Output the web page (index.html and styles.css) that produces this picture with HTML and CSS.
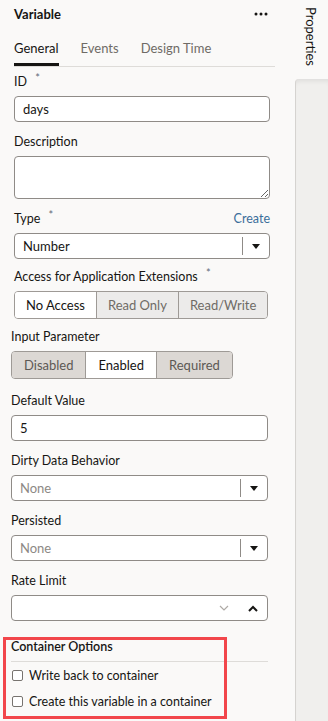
FILE: index.html
```html
<!DOCTYPE html>
<html lang="en">

<head>
    <meta charset="UTF-8">
    <meta name="viewport" content="width=device-width, initial-scale=1.0">
    <title>Variable</title>
    <link rel="stylesheet" href="styles.css">
</head>

<body>
    <div class="app">
        <main class="panel">
            <header class="panel-header">
                <h1 class="panel-title">Variable</h1>
                <span class="more">
                    <svg width="14" height="4" viewBox="0 0 14 4">
                        <circle cx="2" cy="2" r="1.5" />
                        <circle cx="7" cy="2" r="1.5" />
                        <circle cx="12" cy="2" r="1.5" />
                    </svg>
                </span>
            </header>

            <nav class="tabs">
                <span class="tab tab--active">General</span>
                <span class="tab">Events</span>
                <span class="tab">Design Time</span>
            </nav>

            <div class="form form--top">
                <div class="field field--first">
                    <div class="field-label"><span>ID <span class="req">*</span></span></div>
                    <input class="input" type="text" value="days" readonly>
                </div>

                <div class="field">
                    <div class="field-label"><span>Description</span></div>
                    <textarea class="input textarea" readonly></textarea>
                </div>

                <div class="field">
                    <div class="field-label">
                        <span>Type <span class="req">*</span></span>
                        <a class="link">Create</a>
                    </div>
                    <div class="select">
                        <span class="select-value">Number</span>
                        <span class="select-btn">
                            <svg width="8" height="5" viewBox="0 0 8 5"><path d="M0 0h8L4 5z" /></svg>
                        </span>
                    </div>
                </div>

                <div class="field field--choice">
                    <div class="field-label"><span>Access for Application Extensions <span class="req">*</span></span></div>
                    <div class="segmented">
                        <span class="segment segment--on">No Access</span>
                        <span class="segment">Read Only</span>
                        <span class="segment">Read/Write</span>
                    </div>
                </div>
            </div>

            <div class="form form--bottom">
                <div class="field field--choice">
                    <div class="field-label"><span>Input Parameter</span></div>
                    <div class="segmented segmented--dark">
                        <span class="segment">Disabled</span>
                        <span class="segment segment--on">Enabled</span>
                        <span class="segment">Required</span>
                    </div>
                </div>

                <div class="field">
                    <div class="field-label"><span>Default Value</span></div>
                    <input class="input" type="text" value="5" readonly>
                </div>

                <div class="field">
                    <div class="field-label"><span>Dirty Data Behavior</span></div>
                    <div class="select">
                        <span class="select-value placeholder">None</span>
                        <span class="select-btn">
                            <svg width="8" height="5" viewBox="0 0 8 5"><path d="M0 0h8L4 5z" /></svg>
                        </span>
                    </div>
                </div>

                <div class="field">
                    <div class="field-label"><span>Persisted</span></div>
                    <div class="select">
                        <span class="select-value placeholder">None</span>
                        <span class="select-btn">
                            <svg width="8" height="5" viewBox="0 0 8 5"><path d="M0 0h8L4 5z" /></svg>
                        </span>
                    </div>
                </div>

                <div class="field">
                    <div class="field-label"><span>Rate Limit</span></div>
                    <div class="select">
                        <span class="select-value"></span>
                        <span class="combo-icons">
                            <svg class="chev-light" width="10" height="6" viewBox="0 0 10 6"><path d="M1 1l4 4 4-4" /></svg>
                            <svg class="chev-bold" width="10" height="7" viewBox="0 0 10 7"><path d="M1 6l4-4 4 4" /></svg>
                        </span>
                    </div>
                </div>
            </div>

            <!-- container options, outlined in red -->
            <section class="container-options">
                <h2 class="section-title">Container Options</h2>
                <label class="check"><span class="box"></span>Write back to container</label>
                <label class="check"><span class="box"></span>Create this variable in a container</label>
                <div class="highlight"></div>
            </section>
        </main>

        <aside class="side">
            <div class="side-tab"><span>Properties</span></div>
            <div class="side-body"></div>
        </aside>
    </div>
</body>

</html>
```

FILE: styles.css
```css
body {
    margin: 0;
    font-family: "Lato", "Segoe UI", sans-serif;
    font-size: 12.5px;
    color: #161513;
    background-color: #faf9f8;
}

.app {
    display: flex;
    height: 721px;
    overflow: hidden;
}

.panel {
    flex: none;
    width: 295px;
    background-color: #faf9f8;
}

/* header */
.panel-header {
    display: flex;
    align-items: center;
    justify-content: space-between;
    height: 27px;
    padding: 0 27px 0 14px;
}

.panel-title {
    margin: 0;
    font-size: 13px;
    font-weight: 700;
}

.more {
    display: flex;
    fill: #161513;
}

/* tabs */
.tabs {
    display: flex;
    gap: 22px;
    height: 39px;
    margin: 0 20px 0 14px;
    border-bottom: 1px solid #dedcd9;
    font-size: 13px;
}

.tab {
    display: flex;
    align-items: center;
    padding-top: 3px;
    color: #6f6b66;
}

.tab--active {
    color: #161513;
    box-shadow: inset 0 -3px 0 #161513;
}

/* form */
.form--top {
    padding: 0 25px 0 14px;
}

.form--bottom {
    padding: 0 27px 0 11px;
}

.field {
    margin-top: 12px;
}

.field--first {
    margin-top: 7px;
}

.field--choice {
    margin-top: 10px;
}

.field--choice + .field {
    margin-top: 14px;
}

.field-label {
    display: flex;
    justify-content: space-between;
    height: 16px;
    line-height: 16px;
    margin-bottom: 6px;
    white-space: nowrap;
}

.req {
    margin-left: 5px;
    font-size: 11px;
    line-height: 0;
    vertical-align: 4px;
    color: #5f6a78;
}

.link {
    color: #3b6e9b;
}

.input {
    display: block;
    box-sizing: border-box;
    width: 100%;
    height: 26px;
    margin: 0;
    padding: 0 8px;
    border: 1px solid #8f8b87;
    border-radius: 4px;
    background-color: #fff;
    font: inherit;
    font-size: 13px;
    color: #161513;
    outline: none;
}

.textarea {
    height: 43px;
    resize: vertical;
}

.select {
    display: flex;
    align-items: center;
    box-sizing: border-box;
    height: 26px;
    border: 1px solid #8f8b87;
    border-radius: 4px;
    background-color: #fff;
    font-size: 13px;
}

.select-value {
    flex: 1;
    padding-left: 8px;
}

.placeholder {
    color: #8d8985;
}

.select-btn {
    display: flex;
    align-items: center;
    justify-content: center;
    align-self: stretch;
    width: 26px;
    margin: 3px 0;
    border-left: 1px solid #8f8b87;
    fill: #161513;
}

.combo-icons {
    display: flex;
    align-items: center;
    gap: 19px;
    padding-right: 9px;
}

.chev-light {
    fill: none;
    stroke: #aeaaa6;
    stroke-width: 1.2;
}

.chev-bold {
    fill: none;
    stroke: #161513;
    stroke-width: 2;
}

/* segmented buttons */
.segmented {
    display: inline-flex;
    box-sizing: border-box;
    height: 28px;
    border: 1px solid #9e9a96;
    border-radius: 4px;
    overflow: hidden;
    white-space: nowrap;
    font-size: 13px;
}

.segment {
    display: flex;
    align-items: center;
    padding: 0 11px;
    background-color: #ecebea;
    color: #6f6b66;
    border-left: 1px solid #9e9a96;
}

.segment:first-child {
    border-left: none;
}

.segmented--dark .segment {
    padding: 0 12px;
    background-color: #dcd8d4;
    color: #5d5955;
}

.segmented .segment--on,
.segmented--dark .segment--on {
    background-color: #fff;
    color: #161513;
}

/* container options */
.container-options {
    position: relative;
    margin: 18px 27px 0 11px;
}

.section-title {
    margin: 0;
    padding-bottom: 6px;
    border-bottom: 1px solid #dedcd9;
    font-size: 12.5px;
    font-weight: 600;
    line-height: 16px;
}

.check {
    display: flex;
    align-items: center;
    gap: 6px;
    height: 26px;
    white-space: nowrap;
}

.box {
    box-sizing: border-box;
    width: 11px;
    height: 11px;
    margin-left: 1px;
    border: 1.5px solid #77736f;
    border-radius: 2px;
    background-color: #fff;
}

.highlight {
    position: absolute;
    left: -8px;
    top: -2px;
    width: 224px;
    height: 82px;
    box-sizing: border-box;
    border: 3px solid #f2464b;
    pointer-events: none;
}

/* right side strip */
.side {
    flex: 1;
    display: flex;
    flex-direction: column;
    background-color: #faf9f8;
}

.side-tab {
    height: 79px;
    box-sizing: border-box;
    padding: 7px 0 0 8px;
    font-size: 13px;
}

.side-tab span {
    writing-mode: vertical-rl;
    line-height: 16px;
}

.side-body {
    flex: 1;
    background-color: #f0efed;
    border-left: 1px solid #d5d3d0;
    border-top-left-radius: 4px;
    box-shadow: inset 0 5px 5px -3px rgba(0, 0, 0, 0.08);
}
```
